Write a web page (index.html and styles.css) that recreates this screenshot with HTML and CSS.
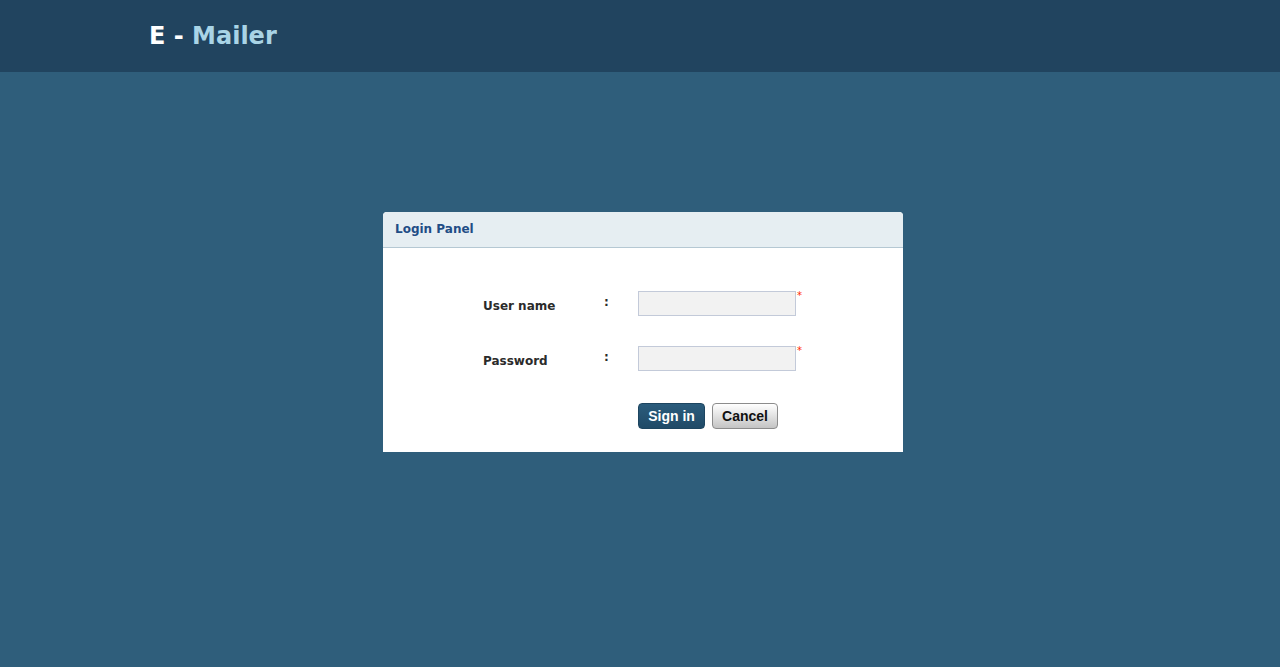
FILE: index.html
```html
<!DOCTYPE html>
<html>
  <head>
    <title>E - Mailer</title>
    <link rel="stylesheet" href="styles.css">
  </head>

  <body>
    <div class="topbar">
      <div class="logo"><span class="logo-e">E -</span> Mailer</div>
    </div>

    <div class="login-panel">
      <div class="panel-title">Login Panel</div>
      <div class="panel-body">
        <div class="form-grid">
          <label for="username">User name</label>
          <span class="colon">:</span>
          <div class="field">
            <input type="text" id="username" />
            <span class="req">*</span>
          </div>

          <label for="password">Password</label>
          <span class="colon">:</span>
          <div class="field">
            <input type="password" id="password" />
            <span class="req">*</span>
          </div>

          <span></span>
          <span></span>
          <div class="buttons">
            <button class="btn-signin">Sign in</button>
            <button class="btn-cancel">Cancel</button>
          </div>
        </div>
      </div>
    </div>
  </body>
</html>
```

FILE: styles.css
```css
body {
  margin: 0;
  background-color: #2f5e7b;
  font-family: "DejaVu Sans", Verdana, sans-serif;
}

.topbar {
  height: 72px;
  background-color: #21445f;
  padding-left: 149px;
  display: flex;
  align-items: center;
}

.logo {
  font-size: 24px;
  font-weight: bold;
  color: #a9d4e6;
  margin-top: -1px;
}

.logo-e {
  color: #ffffff;
}

.login-panel {
  width: 520px;
  margin: 140px 0 0 calc(50% - 257px);
  background-color: #ffffff;
  border-radius: 4px 4px 0 0;
}

.panel-title {
  height: 35px;
  line-height: 35px;
  padding-left: 12px;
  background-color: #e6eef2;
  border-bottom: 1px solid #b5c8d3;
  border-radius: 4px 4px 0 0;
  color: #1f4d86;
  font-size: 12px;
  font-weight: bold;
}

.panel-body {
  padding: 43px 0 23px 100px;
}

.form-grid {
  display: grid;
  grid-template-columns: 121px 34px auto;
  row-gap: 30px;
  align-items: center;
}

.form-grid label {
  font-size: 12px;
  font-weight: bold;
  color: #2b2b2b;
  padding-top: 4px;
}

.colon {
  font-size: 12px;
  font-weight: bold;
  color: #2b2b2b;
  margin-top: -4px;
}

.field {
  display: flex;
  align-items: flex-start;
}

.field input {
  width: 154px;
  height: 23px;
  padding: 0 1px;
  margin: 0;
  border: 1px solid #c3cad9;
  background-color: #f2f2f2;
  box-sizing: content-box;
  font-size: 12px;
}

.req {
  color: #ff2a00;
  font-size: 10px;
  line-height: 10px;
  margin-left: 1px;
}

.buttons {
  display: flex;
  gap: 7px;
  margin-top: 2px;
}

.buttons button {
  height: 26px;
  padding: 0;
  border-radius: 4px;
  font-family: "Liberation Sans", Arial, sans-serif;
  font-size: 14px;
  font-weight: bold;
  cursor: pointer;
}

.btn-signin {
  width: 67px;
  border: 1px solid #1d4560;
  background: linear-gradient(#2b5c7c, #204a67);
  color: #ffffff;
}

.btn-cancel {
  width: 66px;
  border: 1px solid #8c8c8c;
  background: linear-gradient(#ffffff, #e2e2e2 50%, #c4c4c4);
  color: #111111;
}
```
